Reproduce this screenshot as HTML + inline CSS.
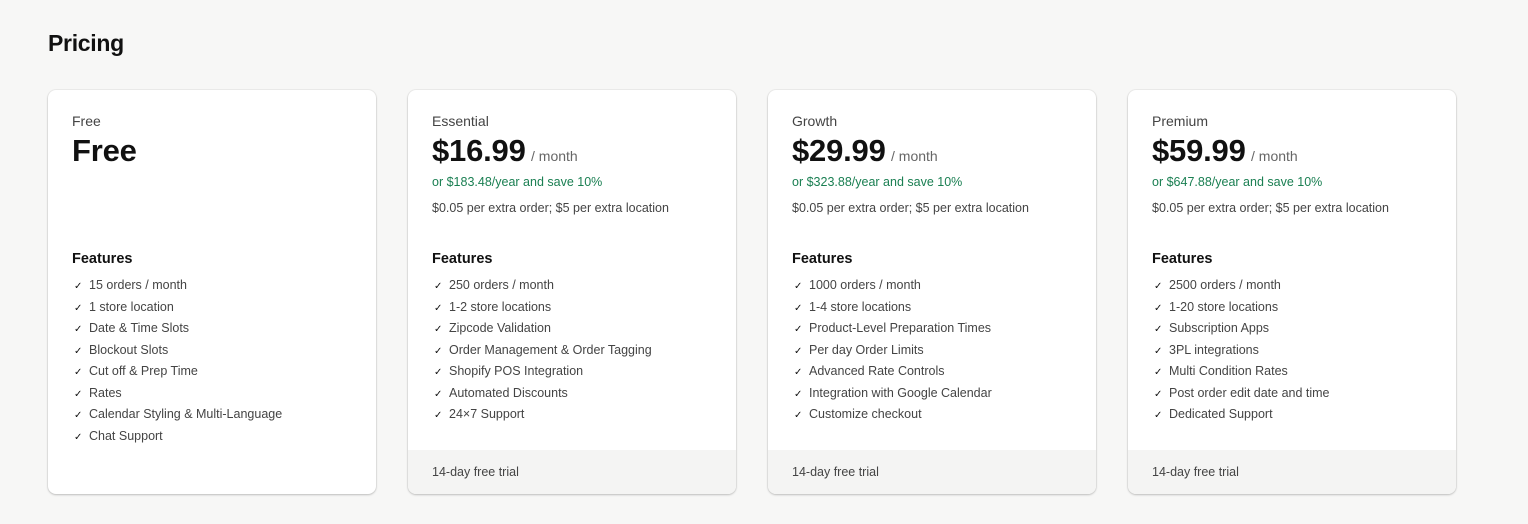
<!DOCTYPE html>
<html><head><meta charset="utf-8"><style>
*{margin:0;padding:0;box-sizing:border-box}
body{width:1528px;height:524px;background:#f7f7f6;font-family:"Liberation Sans",sans-serif;color:#303030;position:relative;overflow:hidden}
h1{position:absolute;left:48px;top:30px;font-size:23px;font-weight:bold;color:#111;letter-spacing:-0.3px}
.card{position:absolute;top:90px;width:328px;height:404px;background:#fff;border-radius:8px;box-shadow:0 1px 2px rgba(0,0,0,.2),0 0 0 1px rgba(0,0,0,.04);overflow:hidden}
.in{position:absolute;left:24px;right:20px;top:0}
.name{position:absolute;top:23px;font-size:14px;color:#444}
.price{position:absolute;top:43px;font-size:31px;font-weight:bold;color:#111;white-space:nowrap;letter-spacing:-0.2px}
.price span{font-size:14px;font-weight:normal;color:#666;letter-spacing:0;margin-left:-3px}
.green{position:absolute;top:85px;font-size:12.5px;color:#1a7f52;white-space:nowrap}
.extra{position:absolute;top:111px;font-size:12.5px;color:#444;white-space:nowrap}
.feat{position:absolute;top:161px;font-size:14.5px;font-weight:bold;color:#111}
ul{position:absolute;top:188px;list-style:none;font-size:12.5px;color:#444}
li{height:21.5px;white-space:nowrap}
li:before{content:"✓";display:inline-block;width:15px;font-size:10px;color:#111;padding-left:2px}
.foot{position:absolute;left:0;right:0;bottom:0;height:44px;background:#f4f4f3;font-size:12.5px;color:#444;padding:15px 0 0 24px}
</style></head><body>
<h1>Pricing</h1>
<div class="card" style="left:48px"><div class="in">
<div class="name">Free</div><div class="price">Free</div>
<div class="feat">Features</div>
<ul><li>15 orders / month</li><li>1 store location</li><li>Date &amp; Time Slots</li><li>Blockout Slots</li><li>Cut off &amp; Prep Time</li><li>Rates</li><li>Calendar Styling &amp; Multi-Language</li><li>Chat Support</li></ul>
</div></div>
<div class="card" style="left:408px"><div class="in">
<div class="name">Essential</div><div class="price">$16.99 <span>/ month</span></div>
<div class="green">or $183.48/year and save 10%</div><div class="extra">$0.05 per extra order; $5 per extra location</div>
<div class="feat">Features</div>
<ul><li>250 orders / month</li><li>1-2 store locations</li><li>Zipcode Validation</li><li>Order Management &amp; Order Tagging</li><li>Shopify POS Integration</li><li>Automated Discounts</li><li>24×7 Support</li></ul>
</div><div class="foot">14-day free trial</div></div>
<div class="card" style="left:768px"><div class="in">
<div class="name">Growth</div><div class="price">$29.99 <span>/ month</span></div>
<div class="green">or $323.88/year and save 10%</div><div class="extra">$0.05 per extra order; $5 per extra location</div>
<div class="feat">Features</div>
<ul><li>1000 orders / month</li><li>1-4 store locations</li><li>Product-Level Preparation Times</li><li>Per day Order Limits</li><li>Advanced Rate Controls</li><li>Integration with Google Calendar</li><li>Customize checkout</li></ul>
</div><div class="foot">14-day free trial</div></div>
<div class="card" style="left:1128px"><div class="in">
<div class="name">Premium</div><div class="price">$59.99 <span>/ month</span></div>
<div class="green">or $647.88/year and save 10%</div><div class="extra">$0.05 per extra order; $5 per extra location</div>
<div class="feat">Features</div>
<ul><li>2500 orders / month</li><li>1-20 store locations</li><li>Subscription Apps</li><li>3PL integrations</li><li>Multi Condition Rates</li><li>Post order edit date and time</li><li>Dedicated Support</li></ul>
</div><div class="foot">14-day free trial</div></div>
</body></html>
